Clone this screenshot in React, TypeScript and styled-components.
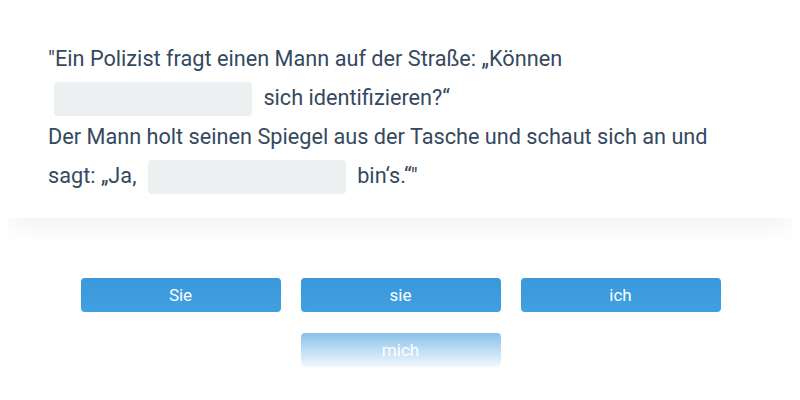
import styled, { createGlobalStyle } from 'styled-components'

const colors = {
  ink: '#34495e',
  blank: '#ecf0f1',
  blue: '#3998db',
  blueLow: '#41a0df',
};

const GlobalStyle = createGlobalStyle`
  body {
    margin: 8px;
    background: #ffffff;
    font-family: Roboto, 'Liberation Sans', sans-serif;
  }
`;

const Card = styled.section`
  margin-top: 12px;
  background: #ffffff;
  padding: 19px 40px 23px;
  box-shadow: 0 10px 22px rgba(0, 0, 0, 0.05);
`;

const Text = styled.p`
  margin: 0;
  font-size: 21.7px;
  line-height: 39px;
  color: ${colors.ink};
`;

const Blank = styled.span`
  display: inline-block;
  width: 198px;
  height: 34px;
  margin: 0 6px;
  vertical-align: middle;
  background: ${colors.blank};
  border-radius: 4px;
`;

const Options = styled.div`
  display: flex;
  flex-wrap: wrap;
  justify-content: center;
  gap: 21px 20px;
  width: 640px;
  margin: 60px auto 0;
  padding-left: 1px;
`;

const Option = styled.button<{ $fading?: boolean }>`
  width: 200px;
  height: 34px;
  border: none;
  border-radius: 4px;
  padding: 0;
  font-family: Roboto, 'Liberation Sans', sans-serif;
  font-size: 17px;
  color: #ffffff;
  cursor: pointer;
  background: ${(p) =>
    p.$fading
      ? 'linear-gradient(rgba(57, 152, 219, 0.6), rgba(57, 152, 219, 0.06))'
      : `linear-gradient(${colors.blue}, ${colors.blueLow})`};
`;

function App() {
  return (
    <>
      <GlobalStyle />
      <Card>
        <Text>
          "Ein Polizist fragt einen Mann auf der Straße: „Können <Blank /> sich identifizieren?“
          <br />
          Der Mann holt seinen Spiegel aus der Tasche und schaut sich an und sagt: „Ja, <Blank /> bin‘s.“"
        </Text>
      </Card>
      <Options>
        <Option>Sie</Option>
        <Option>sie</Option>
        <Option>ich</Option>
        <Option $fading>mich</Option>
      </Options>
    </>
  );
}

export default App
